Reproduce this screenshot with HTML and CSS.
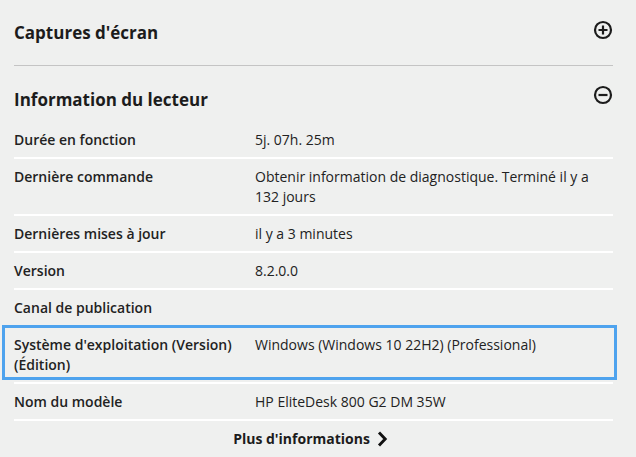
FILE: index.html
```html
<!DOCTYPE html>
<html lang="fr">
<head>
<meta charset="utf-8">
<title>Information du lecteur</title>
<link rel="stylesheet" href="styles.css">
</head>
<body>
<div class="panel">
  <section class="section collapsed">
    <div class="section-header">
      <h2 class="section-title">Captures d'écran</h2>
      <svg class="toggle" width="20" height="20" viewBox="0 0 20 20" aria-hidden="true">
        <circle cx="10" cy="10" r="8" fill="none" stroke="#1c1c1c" stroke-width="2.2"/>
        <path d="M10 5.5V14.5M5.5 10H14.5" stroke="#1c1c1c" stroke-width="2.2" fill="none"/>
      </svg>
    </div>
  </section>
  <section class="section open">
    <div class="section-header">
      <h2 class="section-title">Information du lecteur</h2>
      <svg class="toggle" width="20" height="20" viewBox="0 0 20 20" aria-hidden="true">
        <circle cx="10" cy="10" r="8" fill="none" stroke="#1c1c1c" stroke-width="2.2"/>
        <path d="M5.5 10H14.5" stroke="#1c1c1c" stroke-width="2.2" fill="none"/>
      </svg>
    </div>
    <dl class="info">
      <div class="row"><dt>Durée en fonction</dt><dd>5j. 07h. 25m</dd></div>
      <div class="row"><dt>Dernière commande</dt><dd>Obtenir information de diagnostique. Terminé il y a 132 jours</dd></div>
      <div class="row"><dt>Dernières mises à jour</dt><dd>il y a 3 minutes</dd></div>
      <div class="row"><dt>Version</dt><dd>8.2.0.0</dd></div>
      <div class="row"><dt>Canal de publication</dt><dd></dd></div>
      <div class="row highlighted"><dt>Système d'exploitation (Version) (Édition)</dt><dd>Windows (Windows 10 22H2) (Professional)</dd></div>
      <div class="row"><dt>Nom du modèle</dt><dd>HP EliteDesk 800 G2 DM 35W</dd></div>
    </dl>
    <a class="more" href="#">Plus d'informations
      <svg class="chevron" width="11" height="16" viewBox="0 0 11 16" aria-hidden="true">
        <path d="M2 1.5L8.2 8L2 14.5" fill="none" stroke="#111" stroke-width="2.9"/>
      </svg>
    </a>
  </section>
</div>
</body>
</html>
```
FILE: styles.css
```css
html, body {
  margin: 0;
  padding: 0;
  background: #eff0ef;
}
body {
  font-family: "Open Sans", "Noto Sans", sans-serif;
  color: #222;
  font-size: 14px;
  line-height: 20px;
}
.panel {
  padding: 0 23px 0 14px;
}
.section.collapsed {
  border-bottom: 1px solid #c4c4c4;
}
.section-header {
  display: flex;
  justify-content: space-between;
  align-items: flex-start;
}
.collapsed .section-header {
  padding: 21px 0 20px;
}
.open .section-header {
  padding: 22px 0 10px;
}
.section-title {
  margin: 0;
  font-size: 17px;
  line-height: 24px;
  font-weight: 700;
  color: #1c1c1c;
}
.toggle {
  display: block;
  margin-top: -1px;
}
.open .toggle {
  margin-top: -3px;
}
.info {
  margin: 0;
}
.row {
  position: relative;
  display: grid;
  grid-template-columns: 241px 1fr;
  padding: 8px 0 7px;
  border-bottom: 2px solid #ffffff;
}
.row dt {
  font-weight: 600;
  padding-right: 6px;
}
.row dd {
  margin: 0;
}
.row.highlighted::after {
  content: "";
  position: absolute;
  top: -2px;
  bottom: 2px;
  left: -12px;
  right: -4px;
  border: 3px solid #4ea3ee;
  pointer-events: none;
}
.more {
  display: flex;
  justify-content: center;
  align-items: center;
  gap: 7px;
  padding: 8px 6px 10px 0;
  font-weight: 700;
  color: #1c1c1c;
  text-decoration: none;
}
.chevron {
  display: block;
}
```
